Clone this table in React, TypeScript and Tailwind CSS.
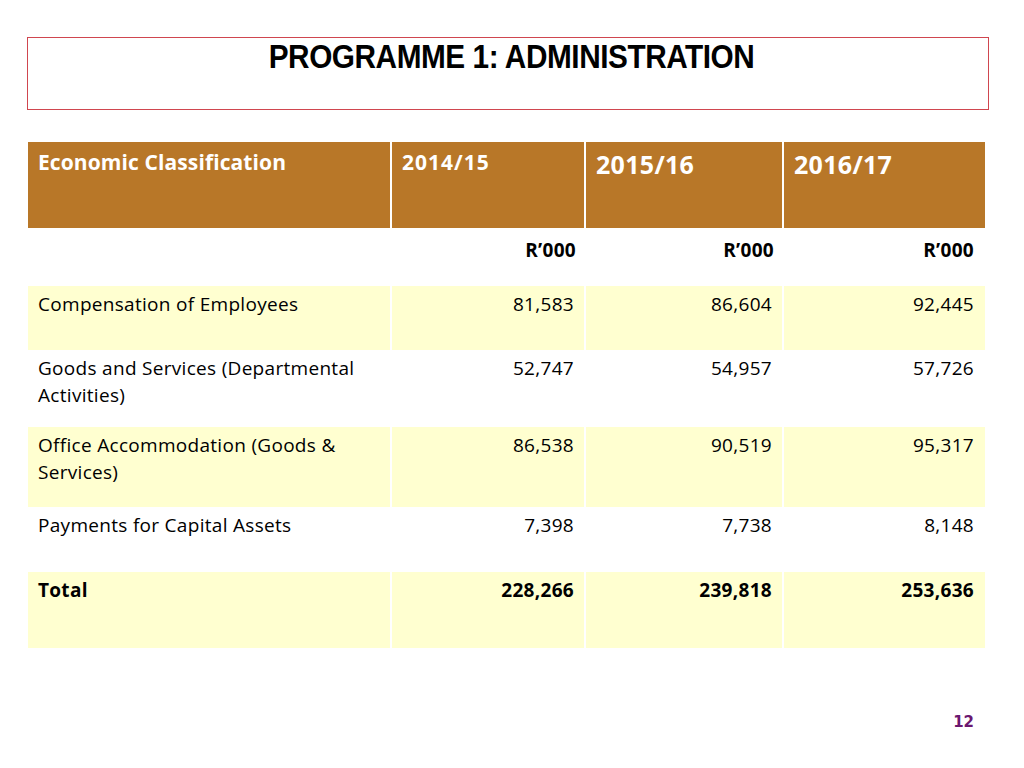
import React from "react";

const rows = [
  { label: "Compensation of Employees", a: "81,583", b: "86,604", c: "92,445", h: "h-[64px]", bg: "bg-[#ffffd0]" },
  { label: "Goods and Services (Departmental Activities)", a: "52,747", b: "54,957", c: "57,726", h: "h-[77px]", bg: "bg-white" },
  { label: "Office Accommodation (Goods & Services)", a: "86,538", b: "90,519", c: "95,317", h: "h-[80px]", bg: "bg-[#ffffd0]" },
  { label: "Payments for Capital Assets", a: "7,398", b: "7,738", c: "8,148", h: "h-[65px]", bg: "bg-white" },
];

const font = { fontFamily: "'Open Sans', Lato, sans-serif" };
const cols = "grid grid-cols-[364px_194px_198px_201px]";

function App() {
  return (
    <div className="w-[1024px] h-[768px] bg-white relative overflow-hidden" style={font}>
      {/* Title */}
      <div className="ml-[27px] mt-[37px] w-[962px] h-[73px] border border-[#d0464f] flex justify-center">
        <h1
          className="text-[34px] font-bold text-black leading-none mt-[1px] ml-[8px] tracking-[-0.5px] scale-x-[0.875] whitespace-nowrap"
          style={{ fontFamily: "'Liberation Sans', Arial, sans-serif" }}
        >
          PROGRAMME 1: ADMINISTRATION
        </h1>
      </div>

      {/* Table */}
      <div className="ml-[28px] mt-[32px] w-[957px] text-[19px] tracking-[0.3px] text-black">
        <div className={`${cols} h-[86px] bg-[#b87728] text-white font-bold`}>
          <div className="px-[10px] pt-[5px] border-r-2 border-white text-[21px] tracking-[0.1px]">Economic Classification</div>
          <div className="px-[10px] pt-[5px] border-r-2 border-white text-[21px] tracking-[1px]">2014/15</div>
          <div className="px-[10px] pt-[4px] border-r-2 border-white text-[25px]">2015/16</div>
          <div className="px-[10px] pt-[4px] text-[25px]">2016/17</div>
        </div>
        <div className={`${cols} h-[58px] font-bold text-right`}>
          <div></div>
          <div className="pr-[10px] pt-[8px]">R’000</div>
          <div className="pr-[10px] pt-[8px]">R’000</div>
          <div className="pr-[11px] pt-[8px]">R’000</div>
        </div>
        {rows.map((r) => (
          <div key={r.label} className={`${cols} ${r.h} ${r.bg} leading-[27px]`}>
            <div className="px-[10px] pt-[5px] border-r-2 border-white">{r.label}</div>
            <div className="pr-[10px] pt-[5px] text-right border-r-2 border-white">{r.a}</div>
            <div className="pr-[10px] pt-[5px] text-right border-r-2 border-white">{r.b}</div>
            <div className="pr-[11px] pt-[5px] text-right">{r.c}</div>
          </div>
        ))}
        <div className={`${cols} h-[76px] bg-[#ffffd0] font-bold leading-[27px]`}>
          <div className="px-[10px] pt-[5px] border-r-2 border-white">Total</div>
          <div className="pr-[10px] pt-[5px] text-right border-r-2 border-white">228,266</div>
          <div className="pr-[10px] pt-[5px] text-right border-r-2 border-white">239,818</div>
          <div className="pr-[11px] pt-[5px] text-right">253,636</div>
        </div>
      </div>

      {/* Page number */}
      <div
        className="absolute right-[50px] top-[711px] text-[15px] font-bold text-[#6b1770]"
        style={{ fontFamily: "'DejaVu Sans', Verdana, sans-serif" }}
      >
        12
      </div>
    </div>
  );
}

export default App;
